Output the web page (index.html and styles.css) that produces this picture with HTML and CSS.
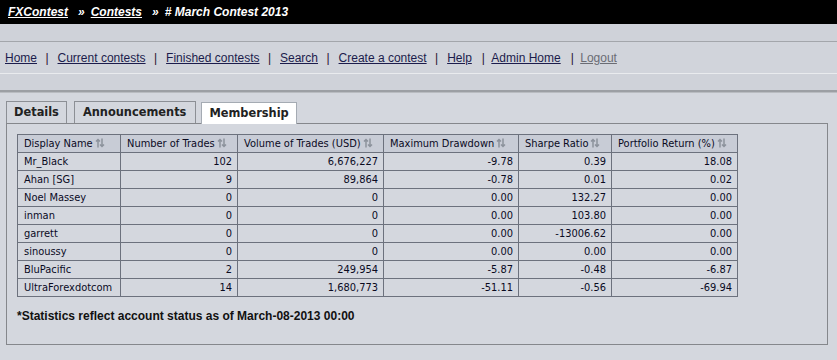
FILE: index.html
```html
<!DOCTYPE html>
<html lang="en">
<head>
<meta charset="UTF-8">
<title># March Contest 2013</title>
<link rel="stylesheet" href="styles.css">
</head>
<body>
<div class="crumbs">
    <a href="#">FXContest</a><span class="raquo">&raquo;</span><a href="#">Contests</a><span class="raquo">&raquo;</span><span class="current"># March Contest 2013</span>
</div>
<div class="band"></div>
<div class="nav"><a href="#">Home</a><span class="sep">|</span><a href="#">Current contests</a><span class="sep">|</span><a href="#">Finished contests</a><span class="sep">|</span><a href="#">Search</a><span class="sep">|</span><a href="#">Create a contest</a><span class="sep">|</span><a href="#">Help</a><span class="sep wide">|</span><a href="#">Admin Home</a><span class="sep wide">|</span><a href="#" class="logout">Logout</a></div>
<div class="band bottom"></div>

<div class="tabs">
    <div class="tab">Details</div>
    <div class="tab">Announcements</div>
    <div class="tab active">Membership</div>
</div>
<div class="panel">
    <table class="members">
        <colgroup>
            <col style="width:103px">
            <col style="width:117px">
            <col style="width:146px">
            <col style="width:135px">
            <col style="width:93px">
            <col style="width:126px">
        </colgroup>
        <thead>
            <tr>
                <th>Display Name<span class="sort"></span></th>
                <th>Number of Trades<span class="sort"></span></th>
                <th>Volume of Trades (USD)<span class="sort"></span></th>
                <th>Maximum Drawdown<span class="sort"></span></th>
                <th>Sharpe Ratio<span class="sort"></span></th>
                <th>Portfolio Return (%)<span class="sort"></span></th>
            </tr>
        </thead>
        <tbody id="rows"></tbody>
    </table>
    <p class="note">*Statistics reflect account status as of March-08-2013 00:00</p>
</div>

<script>
var data = [
    ["Mr_Black", "102", "6,676,227", "-9.78", "0.39", "18.08"],
    ["Ahan [SG]", "9", "89,864", "-0.78", "0.01", "0.02"],
    ["Noel Massey", "0", "0", "0.00", "132.27", "0.00"],
    ["inman", "0", "0", "0.00", "103.80", "0.00"],
    ["garrett", "0", "0", "0.00", "-13006.62", "0.00"],
    ["sinoussy", "0", "0", "0.00", "0.00", "0.00"],
    ["BluPacific", "2", "249,954", "-5.87", "-0.48", "-6.87"],
    ["UltraForexdotcom", "14", "1,680,773", "-51.11", "-0.56", "-69.94"]
];

var icon = '<svg width="10" height="10" viewBox="0 0 10 10"><path d="M3 1.5v8M1 3.5l2-2 2 2" fill="none" stroke="#8c929c" stroke-width="1.5"/><path d="M7 0.5v8M5 6.5l2 2 2-2" fill="none" stroke="#8c929c" stroke-width="1.5"/></svg>';
var sorts = document.querySelectorAll('.sort');
for (var s = 0; s < sorts.length; s++) {
    sorts[s].innerHTML = icon;
}

var tbody = document.getElementById('rows');
for (var i = 0; i < data.length; i++) {
    var tr = document.createElement('tr');
    for (var j = 0; j < data[i].length; j++) {
        var td = document.createElement('td');
        td.textContent = data[i][j];
        if (j > 0) td.className = "num";
        tr.appendChild(td);
    }
    tbody.appendChild(tr);
}
</script>
</body>
</html>
```

FILE: styles.css
```css
body {
    margin: 0;
    background-color: #d4d7de;
    font-family: "Liberation Sans", Arial, sans-serif;
    color: #111;
}

.crumbs {
    height: 24px;
    line-height: 24px;
    padding-left: 8px;
    background-color: #000;
    color: #fff;
    font-size: 12px;
    font-weight: bold;
    font-style: italic;
}

.crumbs a {
    color: #fff;
}

.crumbs .raquo {
    margin: 0 6px 0 10px;
}

.band {
    height: 17px;
    background-color: #cfd2d9;
    border-bottom: 1px solid #a3a6ab;
}

.band.bottom {
    height: 16px;
    border-top: 1px solid #e9ebee;
    border-bottom: 2px solid #9c9fa4;
    box-shadow: 0 1px 0 #b9bcc1;
}

.nav {
    height: 31px;
    line-height: 33px;
    padding-left: 5px;
    background-color: #d1d4db;
    font-size: 12px;
    color: #2a1030;
}

.nav a {
    color: #1c1c4c;
}

.nav a.logout {
    color: #6a6c74;
}

.sep {
    margin: 0 9px 0 8.4px;
}

.sep.wide {
    margin: 0 6.4px 0 10px;
}

.tabs {
    display: flex;
    align-items: flex-end;
    margin: 9px 0 0 6px;
    height: 22px;
}

.tab {
    height: 21px;
    line-height: 21px;
    padding: 0 7px;
    margin-right: 7px;
    border: 1px solid #8c8f95;
    border-bottom: none;
    font-family: "DejaVu Sans", Verdana, sans-serif;
    font-size: 11.4px;
    font-weight: bold;
    color: #222;
}

.tab:nth-child(2) {
    margin-right: 5px;
    padding: 0 9px 0 8px;
}

.tab.active {
    height: 21px;
    margin-bottom: -1px;
    background-color: #fff;
    border-color: #a5abb3;
    position: relative;
}

.panel {
    width: 822px;
    height: 222px;
    margin-left: 6px;
    border: 1px solid #85878c;
    padding: 10px 0 0 10px;
    box-sizing: border-box;
}

.members {
    border-collapse: collapse;
    table-layout: fixed;
    width: 721px;
    font-family: "DejaVu Sans", Verdana, sans-serif;
    font-size: 9.9px;
    color: #0a0a1e;
}

.members th,
.members td {
    line-height: 17px;
    padding: 0 5px 0 6px;
    border: 1px solid #6c717d;
    white-space: nowrap;
    overflow: hidden;
}

.members th {
    background-color: #c8ccd6;
    font-weight: normal;
    text-align: left;
}

.members td.num {
    text-align: right;
}

.sort {
    display: inline-block;
    margin-left: 2px;
    vertical-align: -1px;
}

.sort svg {
    display: block;
}

.note {
    margin: 12px 0 0 0;
    font-size: 12px;
    font-weight: bold;
    color: #111;
}
```
